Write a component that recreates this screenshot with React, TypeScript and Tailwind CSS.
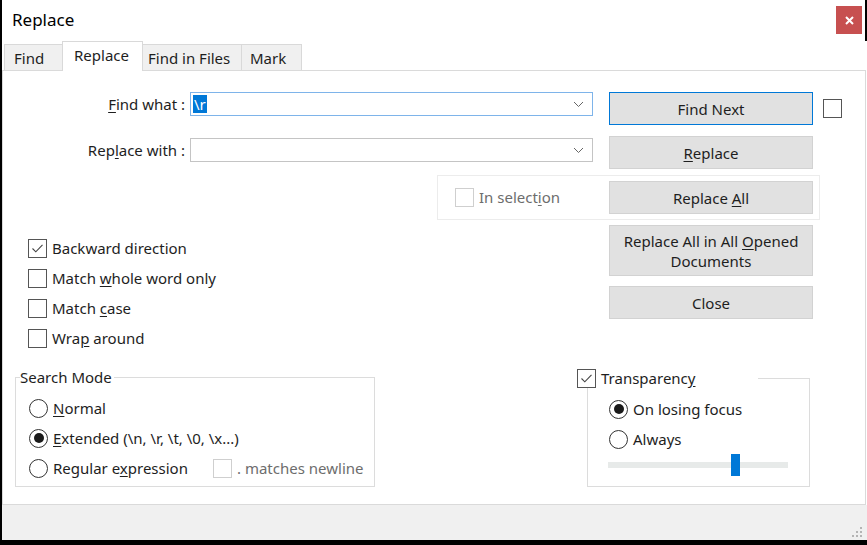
import React from "react";

const U = ({ children }: { children: React.ReactNode }) => <span className="underline underline-offset-2">{children}</span>;

const Check = ({ checked = false, disabled = false }: { checked?: boolean; disabled?: boolean }) => (
  <span
    className={`w-[19px] h-[19px] shrink-0 border bg-white flex items-center justify-center ${
      disabled ? "border-[#cfcfcf]" : "border-[#555555]"
    }`}
  >
    {checked && (
      <svg width="15" height="15" viewBox="0 0 15 15">
        <path d="M2.5 7.5 L5.8 10.8 L12.5 3.8" fill="none" stroke="#444" strokeWidth="1.1" />
      </svg>
    )}
  </span>
);

const Radio = ({ on = false }: { on?: boolean }) => (
  <span className="w-[19px] h-[19px] shrink-0 rounded-full border border-[#333333] bg-white flex items-center justify-center">
    {on && <span className="w-[10px] h-[10px] rounded-full bg-[#1a1a1a]" />}
  </span>
);

const Btn = ({ children, focus = false, tall = false }: { children: React.ReactNode; focus?: boolean; tall?: boolean }) => (
  <div
    className={`w-[204px] ${tall ? "h-[51px]" : "h-[33px]"} ${
      focus ? "border-[#0078d7]" : "border-[#d2d2d2]"
    } border bg-[#e1e1e1] flex items-center justify-center text-center leading-[20px]`}
  >
    <span>{children}</span>
  </div>
);

const Chevron = () => (
  <svg width="11" height="7" viewBox="0 0 11 7" className="mr-[8px]">
    <path d="M1 1 L5.5 5.5 L10 1" fill="none" stroke="#666" strokeWidth="1" />
  </svg>
);

const Combo = ({ focus = false, children }: { focus?: boolean; children?: React.ReactNode }) => (
  <div
    className={`ml-[5px] w-[403px] h-[24px] border bg-white flex items-center justify-between ${
      focus ? "border-[#7eb4ea]" : "border-[#c4c4c4]"
    }`}
  >
    <div className="pl-[2px] flex items-center">{children}</div>
    <Chevron />
  </div>
);

const Row = ({ children }: { children: React.ReactNode }) => (
  <div className="h-[30px] flex items-center gap-[5px]">{children}</div>
);

export default function App() {
  return (
    <div className="w-[867px] h-[545px] bg-black flex flex-col font-['Noto_Sans',sans-serif] text-[15px] text-[#1e1e1e]">
      <div className="h-[540px] ml-[2px] bg-white flex flex-col">
        {/* title bar */}
        <div className="h-[41px] shrink-0 flex items-start justify-between border-r-2 border-black">
          <div className="pl-[10px] pt-[8px] text-[17px] leading-[24px] text-black">Replace</div>
          <div className="mt-[6px] mr-[3px] w-[26px] h-[28px] bg-[#c75050] flex items-center justify-center">
            <svg width="9" height="9" viewBox="0 0 9 9">
              <path d="M1 1 L8 8 M8 1 L1 8" stroke="#fff" strokeWidth="2" />
            </svg>
          </div>
        </div>

        {/* tabs */}
        <div className="h-[29px] shrink-0 flex items-end pl-[2px]">
          <div className="w-[59px] h-[26px] bg-[#f0f0f0] border border-b-0 border-[#d9d9d9] flex items-center pl-[9px] pt-[1px]">
            Find
          </div>
          <div className="relative z-10 -ml-px -mb-px w-[81px] h-[30px] bg-white border border-b-0 border-[#d9d9d9] flex items-center pl-[11px] pb-[3px]">
            Replace
          </div>
          <div className="-ml-px w-[100px] h-[26px] bg-[#f0f0f0] border border-b-0 border-[#d9d9d9] flex items-center pl-[5px] pt-[1px]">
            Find in Files
          </div>
          <div className="-ml-px w-[61px] h-[26px] bg-[#f0f0f0] border border-b-0 border-[#d9d9d9] flex items-center pl-[8px] pt-[1px]">
            Mark
          </div>
        </div>

        {/* panel */}
        <div className="flex-1 mr-[1px] border border-[#dadada] flex flex-col">
          {/* find what */}
          <div className="mt-[21px] flex items-start">
            <div className="w-[182px] h-[24px] flex items-center justify-end">
              <U>F</U>ind what :
            </div>
            <Combo focus>
              <span className="bg-[#0078d7] text-white leading-[18px] px-[1px]">\r</span>
            </Combo>
            <div className="ml-[16px]">
              <Btn focus>Find Next</Btn>
            </div>
            <div className="ml-[10px] mt-[7px]">
              <Check />
            </div>
          </div>

          {/* replace with */}
          <div className="mt-[11px] flex items-start">
            <div className="mt-[2px] w-[182px] h-[24px] flex items-center justify-end">
              Rep<U>l</U>ace with :
            </div>
            <div className="mt-[2px]">
              <Combo />
            </div>
            <div className="ml-[16px]">
              <Btn>
                <U>R</U>eplace
              </Btn>
            </div>
          </div>

          {/* in selection */}
          <div className="mt-[6px] ml-[434px] w-[383px] h-[45px] border border-[#ececec] flex items-center justify-between pl-[17px] pr-[6px]">
            <div className="flex items-center gap-[5px] text-[#6d6d6d]">
              <Check disabled />
              <span>
                In select<U>i</U>on
              </span>
            </div>
            <Btn>
              Replace <U>A</U>ll
            </Btn>
          </div>

          {/* options + buttons */}
          <div className="flex">
            <div className="w-[606px] pl-[25px] pt-[13px] flex flex-col">
              <Row>
                <Check checked />
                <span>Backward direction</span>
              </Row>
              <Row>
                <Check />
                <span>
                  Match <U>w</U>hole word only
                </span>
              </Row>
              <Row>
                <Check />
                <span>
                  Match <U>c</U>ase
                </span>
              </Row>
              <Row>
                <Check />
                <span>
                  Wra<U>p</U> around
                </span>
              </Row>
            </div>
            <div className="pt-[5px] flex flex-col gap-[10px]">
              <Btn tall>
                Replace All in All <U>O</U>pened
                <br />
                Documents
              </Btn>
              <Btn>Close</Btn>
            </div>
          </div>

          {/* group boxes */}
          <div className="mt-[14px] flex items-start">
            <fieldset className="ml-[12px] w-[360px] border border-[#dcdcdc] pb-[3px]">
              <legend className="ml-[4px] pr-[2px] leading-[20px]">Search Mode</legend>
              <div className="mt-[6px] pl-[13px] flex flex-col">
                <Row>
                  <Radio />
                  <span>
                    <U>N</U>ormal
                  </span>
                </Row>
                <Row>
                  <Radio on />
                  <span>
                    <U>E</U>xtended (\n, \r, \t, \0, \x...)
                  </span>
                </Row>
                <Row>
                  <Radio />
                  <span className="w-[155px]">Regular e<U>x</U>pression</span>
                  <Check disabled />
                  <span className="text-[#6d6d6d]">. matches newline</span>
                </Row>
              </div>
            </fieldset>

            <fieldset className="ml-[212px] mt-[2px] w-[223px] border border-[#dcdcdc] pb-[10px]">
              <legend className="-ml-[11px] w-[181px] bg-white">
                <div className="h-[19px] flex items-center gap-[5px]">
                  <Check checked />
                  <span>
                    Transparenc<U>y</U>
                  </span>
                </div>
              </legend>
              <div className="mt-[6px] pl-[21px] flex flex-col">
                <Row>
                  <Radio on />
                  <span>On losing focus</span>
                </Row>
                <Row>
                  <Radio />
                  <span>Always</span>
                </Row>
                <div className="relative -ml-[1px] w-[180px] h-[22px] flex items-center">
                  <div className="w-full h-[6px] bg-[#e7eae9]" />
                  <div className="absolute left-[123px] top-0 w-[9px] h-[22px] bg-[#0078d7]" />
                </div>
              </div>
            </fieldset>
          </div>
        </div>

        {/* footer */}
        <div className="h-[35px] shrink-0 bg-[#f0f0f0] flex items-end justify-end pr-[4px] pb-[2px]">
          <svg width="12" height="12" viewBox="0 0 12 12">
            <g fill="#b4b4b4">
              <rect x="9" y="1" width="2" height="2" />
              <rect x="9" y="5" width="2" height="2" />
              <rect x="5" y="5" width="2" height="2" />
              <rect x="9" y="9" width="2" height="2" />
              <rect x="5" y="9" width="2" height="2" />
              <rect x="1" y="9" width="2" height="2" />
            </g>
          </svg>
        </div>
      </div>
    </div>
  );
}
